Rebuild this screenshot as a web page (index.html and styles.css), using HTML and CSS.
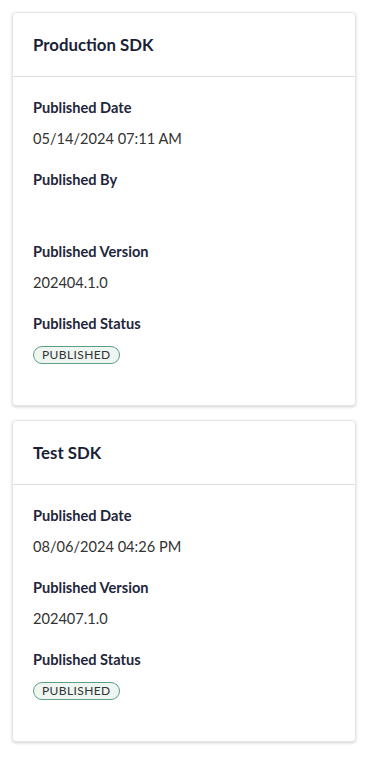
FILE: index.html
```html
<!DOCTYPE html>
<html lang="en">
<head>
  <meta charset="UTF-8">
  <meta name="viewport" content="width=device-width, initial-scale=1.0">
  <title>SDK Versions</title>
  <link rel="stylesheet" href="styles.css">
</head>
<body>
  <div class="sdk-list">
    <div class="sdk-card">
      <div class="sdk-head">Production SDK</div>
      <div class="sdk-body">
        <div class="field">
          <div class="field-label">Published Date</div>
          <div class="field-value">05/14/2024 07:11 AM</div>
        </div>
        <div class="field">
          <div class="field-label">Published By</div>
          <div class="field-value">&nbsp;</div>
        </div>
        <div class="field">
          <div class="field-label">Published Version</div>
          <div class="field-value">202404.1.0</div>
        </div>
        <div class="field">
          <div class="field-label">Published Status</div>
          <div class="field-value"><span class="badge">PUBLISHED</span></div>
        </div>
      </div>
    </div>

    <div class="sdk-card">
      <div class="sdk-head">Test SDK</div>
      <div class="sdk-body">
        <div class="field">
          <div class="field-label">Published Date</div>
          <div class="field-value">08/06/2024 04:26 PM</div>
        </div>
        <div class="field">
          <div class="field-label">Published Version</div>
          <div class="field-value">202407.1.0</div>
        </div>
        <div class="field">
          <div class="field-label">Published Status</div>
          <div class="field-value"><span class="badge">PUBLISHED</span></div>
        </div>
      </div>
    </div>
  </div>
</body>
</html>
```

FILE: styles.css
```css
body { font-family: 'Lato', 'Open Sans', sans-serif; background: #fff; margin: 0; padding: 12px 25px 12px 12px; color: #2e2e2e; }
.sdk-list { display: flex; flex-direction: column; gap: 14px; }
.sdk-card {
  background: #fff;
  border: 1px solid #e6e6e6;
  border-radius: 4px;
  box-shadow: 0 1px 3px rgba(0,0,0,0.18);
}
.sdk-head {
  height: 63px;
  display: flex;
  align-items: center;
  padding: 0 20px;
  font-size: 16.8px;
  font-weight: bold;
  color: #1b1f36;
  border-bottom: 1px solid #dcdcdc;
}
.sdk-body { padding: 21px 20px 19px; }
.field { margin-bottom: 21px; }
.field-label { font-size: 14.6px; line-height: 20px; font-weight: bold; color: #23263a; margin-bottom: 11px; }
.field-value { font-size: 14.6px; line-height: 20px; height: 20px; color: #333; }
.badge {
  display: inline-block;
  vertical-align: top;
  margin-top: 1px;
  font-size: 12px;
  line-height: 16px;
  padding: 0 8px;
  letter-spacing: 0.4px;
  color: #333;
  background: #eef6f2;
  border: 1px solid #5e9e85;
  border-radius: 9px;
}
```
